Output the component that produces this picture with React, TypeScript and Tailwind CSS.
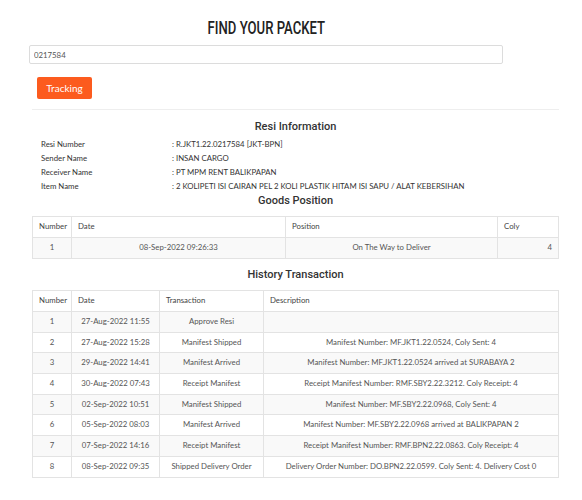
const info = [
  ["Resi Number", ": R.JKT1.22.0217584 [JKT-BPN]"],
  ["Sender Name", ": INSAN CARGO"],
  ["Receiver Name", ": PT MPM RENT BALIKPAPAN"],
  ["Item Name", ": 2 KOLIPETI ISI CAIRAN PEL 2 KOLI PLASTIK HITAM ISI SAPU / ALAT KEBERSIHAN"],
];

const history = [
  ["1", "27-Aug-2022 11:55", "Approve Resi", ""],
  ["2", "27-Aug-2022 15:28", "Manifest Shipped", "Manifest Number: MF.JKT1.22.0524, Coly Sent: 4"],
  ["3", "29-Aug-2022 14:41", "Manifest Arrived", "Manifest Number: MF.JKT1.22.0524 arrived at SURABAYA 2"],
  ["4", "30-Aug-2022 07:43", "Receipt Manifest", "Receipt Manifest Number: RMF.SBY2.22.3212. Coly Receipt: 4"],
  ["5", "02-Sep-2022 10:51", "Manifest Shipped", "Manifest Number: MF.SBY2.22.0968, Coly Sent: 4"],
  ["6", "05-Sep-2022 08:03", "Manifest Arrived", "Manifest Number: MF.SBY2.22.0968 arrived at BALIKPAPAN 2"],
  ["7", "07-Sep-2022 14:16", "Receipt Manifest", "Receipt Manifest Number: RMF.BPN2.22.0863. Coly Receipt: 4"],
  ["8", "08-Sep-2022 09:35", "Shipped Delivery Order", "Delivery Order Number: DO.BPN2.22.0599. Coly Sent: 4. Delivery Cost 0"],
];

const th = "border border-[#e3e3e3] px-[6px] h-[21px] text-left font-normal text-[#444]";
const td = "border border-[#e3e3e3] px-[6px] h-[20.7px] text-center";

export default function App() {
  return (
    <div className="w-[582px] h-[500px] bg-white font-['Lato','Open_Sans',sans-serif] text-[7.8px] text-[#555]">
      {/* Search */}
      <div className="pl-[29px] w-[503px]">
        <div className="pt-[18px] h-[40px] text-center">
          <h1 className="inline-block scale-x-[0.75] font-['Roboto',sans-serif] font-medium text-[17.5px] leading-[20px] text-[#222]">
            FIND YOUR PACKET
          </h1>
        </div>
        <input
          readOnly
          value="0217584"
          className="mt-[5px] block w-[474px] h-[19px] border border-[#dcdcdc] rounded-[2px] px-[4px] text-[7.8px] text-[#555] outline-none"
        />
      </div>
      <div className="mt-[13px] pl-[37px]">
        <button className="w-[55px] h-[22px] bg-[#fc5b1e] rounded-[2px] text-white text-[10px] font-['Lato',sans-serif]">
          Tracking
        </button>
      </div>

      <div className="ml-[32px] mr-[23px] mt-[10px] border-t border-[#eeeeee]">
        {/* Resi info */}
        <h2 className="mt-[10px] text-center font-['Roboto',sans-serif] font-medium text-[11px] leading-[14px] text-[#333]">
          Resi Information
        </h2>
        <div className="mt-[4px] pl-[9px]">
          {info.map(([k, v]) => (
            <div key={k} className="flex h-[14px] items-center">
              <span className="w-[131px] text-[#333]">{k}</span>
              <span className="text-[#333]">{v}</span>
            </div>
          ))}
        </div>
        <h2 className="text-center font-['Roboto',sans-serif] font-medium text-[11px] leading-[14px] text-[#333]">
          Goods Position
        </h2>

        <table className="mt-[8px] w-full border-collapse table-fixed">
          <colgroup>
            <col className="w-[39px]" />
            <col className="w-[214px]" />
            <col className="w-[212px]" />
            <col />
          </colgroup>
          <thead>
            <tr>
              <th className={th}>Number</th>
              <th className={th}>Date</th>
              <th className={th}>Position</th>
              <th className={th}>Coly</th>
            </tr>
          </thead>
          <tbody>
            <tr className="bg-[#f9f9f9]">
              <td className={td + " h-[21px]"}>1</td>
              <td className={td + " h-[21px]"}>08-Sep-2022 09:26:33</td>
              <td className={td + " h-[21px]"}>On The Way to Deliver</td>
              <td className={td + " h-[21px] text-right"}>4</td>
            </tr>
          </tbody>
        </table>

        <h2 className="mt-[9px] text-center font-['Roboto',sans-serif] font-medium text-[11px] leading-[14px] text-[#333]">
          History Transaction
        </h2>

        <table className="mt-[8px] w-full border-collapse table-fixed">
          <colgroup>
            <col className="w-[39px]" />
            <col className="w-[88px]" />
            <col className="w-[104px]" />
            <col />
          </colgroup>
          <thead>
            <tr>
              <th className={th}>Number</th>
              <th className={th}>Date</th>
              <th className={th}>Transaction</th>
              <th className={th}>Description</th>
            </tr>
          </thead>
          <tbody>
            {history.map((r, i) => (
              <tr key={r[0]} className={i % 2 === 0 ? "bg-[#f9f9f9]" : "bg-white"}>
                {r.map((c, j) => (
                  <td key={j} className={td + " whitespace-nowrap"}>
                    {c}
                  </td>
                ))}
              </tr>
            ))}
          </tbody>
        </table>
      </div>
    </div>
  );
}
